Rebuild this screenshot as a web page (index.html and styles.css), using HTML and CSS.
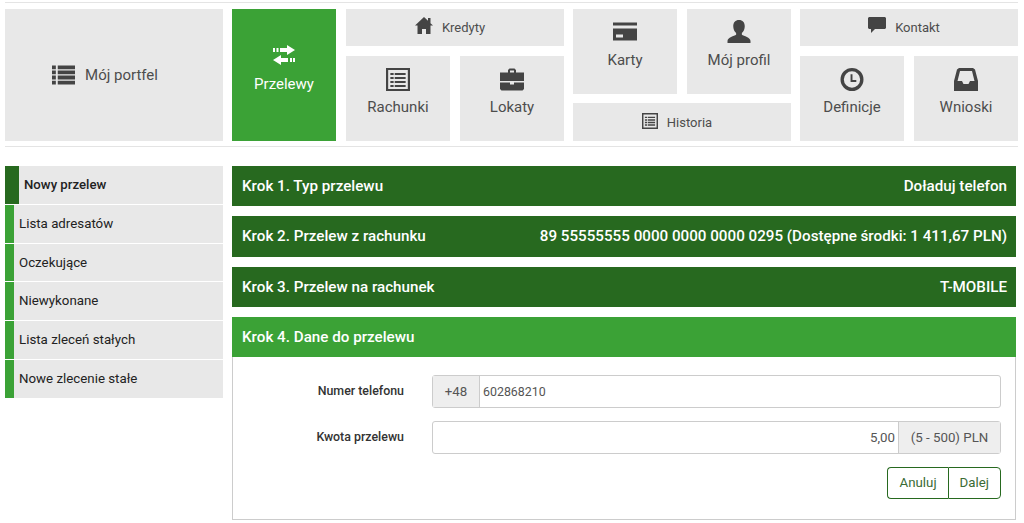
FILE: index.html
```html
<!DOCTYPE html>
<html>
<head>
	<meta charset="utf-8">
	<title>Nowy przelew</title>
	<link rel="stylesheet" href="styles.css">
</head>
<body>
<div id="top_menu">
	<a class="tile tile_row tile_big" href="#">
		<svg class="icon_portfel" viewBox="0 0 24 20"><path d="M0 0h4v4H0zM6 0h18v4H6zM0 5.300h4v4H0zM6 5.300h18v4H6zM0 10.600h4v4H0zM6 10.600h18v4H6zM0 16h4v4H0zM6 16h18v4H6z"/></svg>
		<span>Mój portfel</span>
	</a>
	<a class="tile tile_active" href="#">
		<svg class="icon_transfer" viewBox="0 0 22 20"><path d="M14 0l8 5-8 5V7H7V3h7zM0 3h2v4H0zM3.500 3h2v4h-2zM8 10v3h7v4H8v3l-8-5zM17 13h2v4h-2zM20 13h2v4h-2z"/></svg>
		<span>Przelewy</span>
	</a>
	<div class="group group_shifted">
		<a class="tile tile_row tile_small" href="#">
			<svg class="icon_home" viewBox="0 0 18 17"><path d="M9 0l4 3.800V1h2.500v5.200L18 8.600h-2.500V17h-4.500v-5H7v5H2.500V8.600H0z"/></svg>
			<span>Kredyty</span>
		</a>
		<div class="pair pair_bottom">
			<a class="tile" href="#">
				<svg class="icon_std" viewBox="0 0 22 23" preserveAspectRatio="none"><path fill-rule="evenodd" d="M0 0h22v23H0zM2 2v19h18V2zM4 5h3v2H4zM8 5h10v2H8zM4 9h3v2H4zM8 9h10v2H8zM4 13h3v2H4zM8 13h10v2H8zM4 17h3v2H4zM8 17h10v2H8z"/></svg>
				<span>Rachunki</span>
			</a>
			<a class="tile" href="#">
				<svg class="icon_std" viewBox="0 0 24 22"><path fill-rule="evenodd" d="M8 4V1.500L9.500 0h5L16 1.500V4h8v8.500H0V4zM10 2v2h4V2zM0 14h10v2h4v-2h10v6.500L22.500 22h-21L0 20.500z"/></svg>
				<span>Lokaty</span>
			</a>
		</div>
	</div>
	<div class="group">
		<div class="pair pair_top">
			<a class="tile" href="#">
				<svg class="icon_std" viewBox="0 0 24 18"><path fill-rule="evenodd" d="M0 0h24v3H0zM0 6h24v12H0zM3 12v3h7v-3z"/></svg>
				<span>Karty</span>
			</a>
			<a class="tile" href="#">
				<svg class="icon_std" viewBox="0 0 24 24"><path d="M12 0c3.800 0 6 2.600 6 6.500 0 3-1.200 5.500-3 7v2c2 1.200 9 3 9 6.500v2H0v-2c0-3.500 7-5.300 9-6.500v-2c-1.800-1.500-3-4-3-7C6 2.600 8.200 0 12 0z"/></svg>
				<span>Mój profil</span>
			</a>
		</div>
		<a class="tile tile_row tile_small tile_low" href="#">
			<svg class="icon_small" viewBox="0 0 22 22"><path fill-rule="evenodd" d="M0 0h22v22H0zM2 2v18h18V2zM4 5h3v2H4zM8 5h10v2H8zM4 8.500h3v2H4zM8 8.500h10v2H8zM4 12h3v2H4zM8 12h10v2H8zM4 15.500h3v2H4zM8 15.500h10v2H8z"/></svg>
			<span>Historia</span>
		</a>
	</div>
	<div class="group">
		<a class="tile tile_row tile_small" href="#">
			<svg class="icon_comment" viewBox="0 0 18 16"><path d="M1 0h16l1 1v10l-1 1H7l-4 4v-4H1l-1-1V1z"/></svg>
			<span>Kontakt</span>
		</a>
		<div class="pair pair_bottom">
			<a class="tile" href="#">
				<svg class="icon_std" viewBox="0 0 24 24"><path fill-rule="evenodd" d="M12 0a12 12 0 1 1 0 24a12 12 0 0 1 0-24zM12 3.500a8.500 8.500 0 1 0 0 17a8.500 8.500 0 0 0 0-17zM10.500 6.500h2v6h4v2h-6z"/></svg>
				<span>Definicje</span>
			</a>
			<a class="tile" href="#">
				<svg class="icon_std" viewBox="0 0 24 23"><path fill-rule="evenodd" d="M5 0h14l2 1.500L24 13v10H0V13L3 1.500zM6 3L3.500 13H8l1.500 3h5l1.500-3h4.500L18 3z"/></svg>
				<span>Wnioski</span>
			</a>
		</div>
	</div>
</div>

<div id="content">
	<ul id="side_menu">
		<li class="side_active"><a href="#">Nowy przelew</a></li>
		<li><a href="#">Lista adresatów</a></li>
		<li><a href="#">Oczekujące</a></li>
		<li><a href="#">Niewykonane</a></li>
		<li><a href="#">Lista zleceń stałych</a></li>
		<li><a href="#">Nowe zlecenie stałe</a></li>
	</ul>
	<div id="steps">
		<div class="step"><span>Krok 1. Typ przelewu</span><span>Doładuj telefon</span></div>
		<div class="step"><span>Krok 2. Przelew z rachunku</span><span>89 55555555 0000 0000 0000 0295 (Dostępne środki: 1 411,67 PLN)</span></div>
		<div class="step"><span>Krok 3. Przelew na rachunek</span><span>T-MOBILE</span></div>
		<div class="step step_current"><span>Krok 4. Dane do przelewu</span></div>
		<form id="step_form">
			<div class="form_row">
				<label class="form_name">Numer telefonu</label>
				<div class="input_group">
					<span class="addon addon_left">+48</span>
					<span class="field field_phone">602868210</span>
				</div>
			</div>
			<div class="form_row">
				<label class="form_name">Kwota przelewu</label>
				<div class="input_group">
					<span class="field field_amount">5,00</span>
					<span class="addon addon_right">(5 - 500) PLN</span>
				</div>
			</div>
			<div class="buttons">
				<a class="btn" href="#">Anuluj</a><a class="btn" href="#">Dalej</a>
			</div>
		</form>
	</div>
</div>
</body>
</html>
```

FILE: styles.css
```css
body {
	margin: 0;
	font-family: Roboto, sans-serif;
	background: white;
	color: #4d4d4d;
}
a {
	text-decoration: none;
	color: inherit;
}
svg {
	fill: #444;
	display: block;
	flex: none;
}
#top_menu {
	display: flex;
	gap: 9px;
	margin: 2px 0 0 5px;
	padding: 6px 0 5px 0;
	width: 1013px;
	height: 132px;
	border-top: 1px solid #e4e4e4;
	border-bottom: 1px solid #e4e4e4;
}
.tile {
	background: #e8e8e8;
	display: flex;
	flex-direction: column;
	align-items: center;
	justify-content: center;
	gap: 7px;
	font-size: 15px;
	flex: 1;
	box-sizing: border-box;
}
.tile_row {
	flex-direction: row;
}
.tile_big {
	flex: none;
	width: 218px;
	gap: 10px;
	padding-right: 18px;
}
.tile_active {
	flex: none;
	width: 104px;
	background: #3ba236;
	color: white;
	gap: 10px;
	padding-bottom: 13px;
}
.tile_active svg {
	fill: white;
}
.group {
	flex: none;
	width: 218px;
	display: flex;
	flex-direction: column;
	gap: 10px;
}
.group_shifted {
	margin-left: 1px;
}
.pair {
	display: flex;
	gap: 10px;
	height: 85px;
}
.pair_bottom .tile {
	padding-bottom: 13px;
}
.pair_top .tile {
	gap: 8px;
	padding-bottom: 14px;
}
.tile_small {
	flex: none;
	height: 37px;
	font-size: 13px;
	gap: 9px;
	padding-right: 10px;
}
.tile_low {
	height: 38px;
	margin-top: -1px;
}
.icon_portfel {
	width: 23px;
	height: 20px;
}
.icon_transfer {
	width: 22px;
	height: 20px;
}
.icon_home {
	width: 18px;
	height: 17px;
	margin-top: -4px;
}
.icon_comment {
	width: 18px;
	height: 16px;
	margin-top: -6px;
}
.icon_small {
	width: 16px;
	height: 16px;
	margin-top: -3px;
}
.icon_std {
	height: 23px;
	width: 24px;
}
#content {
	display: flex;
	gap: 9px;
	margin: 19px 8px 0 5px;
}
#side_menu {
	list-style: none;
	margin: 0;
	padding: 0;
	width: 218px;
	flex: none;
	font-size: 13.300px;
	color: #222;
}
#side_menu li {
	height: 37.800px;
	margin-bottom: 1px;
	background: #e8e8e8;
	border-left: 9px solid #3ba236;
	padding-left: 5px;
	line-height: 37px;
}
#side_menu .side_active {
	border-left: 14px solid #27691f;
	font-weight: 500;
	font-size: 13.200px;
}
#steps {
	flex: 1;
}
.step {
	height: 40.300px;
	margin-bottom: 10px;
	padding: 0 9px 0 10px;
	background: #27691f;
	color: white;
	font-size: 15.200px;
	font-weight: 500;
	display: flex;
	align-items: center;
	justify-content: space-between;
}
.step_current {
	background: #3ba236;
	margin-bottom: 0;
}
#step_form {
	height: 163px;
	box-sizing: border-box;
	border: 1px solid #ccc;
	border-top: 0;
	padding: 18px 14px 0 0;
	color: #333;
}
.form_row {
	display: flex;
	align-items: flex-start;
	margin-bottom: 13px;
}
.form_name {
	width: 171px;
	flex: none;
	text-align: right;
	font-size: 12.400px;
	font-weight: 500;
	line-height: 31px;
	margin-right: 28px;
}
.input_group {
	flex: 1;
	height: 33px;
	box-sizing: border-box;
	display: flex;
	border: 1px solid #ccc;
	border-radius: 3px;
	font-size: 13.300px;
	color: #555;
}
.addon {
	background: #eee;
	line-height: 31px;
	text-align: center;
	flex: none;
}
.addon_left {
	width: 46px;
	border-right: 1px solid #ccc;
}
.addon_right {
	width: 101px;
	border-left: 1px solid #ccc;
}
.field {
	flex: 1;
	line-height: 31px;
	padding: 0 3px;
}
.field_phone {
	font-size: 12.400px;
}
.field_amount {
	text-align: right;
}
.buttons {
	display: flex;
	justify-content: flex-end;
	margin-top: 1px;
}
.btn {
	height: 32px;
	box-sizing: border-box;
	border: 1px solid #27691f;
	line-height: 30px;
	font-size: 13.300px;
	color: #3a6b35;
	padding: 0 11px;
}
.btn:first-child {
	border-radius: 4px 0 0 4px;
	border-right: 0;
}
.btn:last-child {
	border-radius: 0 4px 4px 0;
}
```
